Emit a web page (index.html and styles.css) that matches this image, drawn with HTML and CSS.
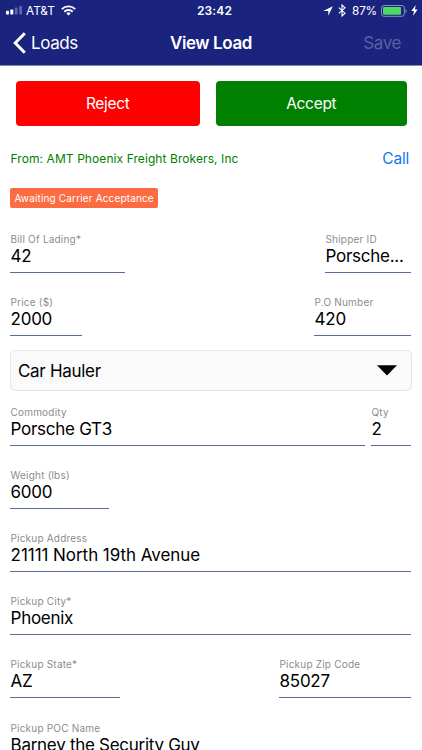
FILE: index.html
```html
<!DOCTYPE html>
<html lang="en">
<head>
    <meta charset="UTF-8">
    <meta name="viewport" content="width=device-width, initial-scale=1.0">
    <title>View Load</title>
    <link rel="stylesheet" href="styles.css">
</head>
<body>
    <header class="header">
        <div class="status-bar">
            <div class="status-left">
                <svg class="signal" width="17" height="9" viewBox="0 0 17 9">
                    <rect x="0" y="4.8" width="3" height="3.6" rx="0.6" fill="#fff"/>
                    <rect x="4.3" y="3.4" width="3" height="5" rx="0.6" fill="#fff"/>
                    <rect x="8.8" y="1.6" width="2.8" height="6.8" rx="0.6" fill="#5f65a8"/>
                    <rect x="13.2" y="0" width="2.8" height="8.4" rx="0.6" fill="#5f65a8"/>
                </svg>
                <span class="carrier">AT&amp;T</span>
                <svg class="wifi" width="15" height="11" viewBox="0 0 15 11" fill="none" stroke="#fff" stroke-width="1.9">
                    <path d="M0.8 4.1a9.6 9.6 0 0 1 13.4 0"/>
                    <path d="M3.3 6.7a6 6 0 0 1 8.4 0"/>
                    <path d="M7.5 10.6L5.3 8.4a3.1 3.1 0 0 1 4.4 0z" fill="#fff" stroke="none"/>
                </svg>
            </div>
            <span class="time">23:42</span>
            <div class="status-right">
                <svg class="location" width="10" height="10" viewBox="0 0 10 10">
                    <path d="M9.8 0.2L5.3 9.8V4.9H0.3z" fill="#fff"/>
                </svg>
                <svg class="bluetooth" width="8" height="13" viewBox="0 0 8 13" fill="none" stroke="#fff" stroke-width="1.1">
                    <path d="M0.8 3.6L7 9.2L4 12V1L7 3.8L0.8 9.4"/>
                </svg>
                <span class="percent">87%</span>
                <svg class="battery" width="26" height="12" viewBox="0 0 26 12">
                    <rect x="0.5" y="0.5" width="22.8" height="10.8" rx="2.4" fill="none" stroke="#8b90c4"/>
                    <rect x="2" y="2" width="18" height="7.8" rx="0.8" fill="#4cd964"/>
                    <path d="M24.5 4v4q1.2-0.5 1.2-2t-1.2-2z" fill="#8b90c4"/>
                </svg>
                <svg class="bolt" width="7" height="11" viewBox="0 0 7 11">
                    <path d="M4.8 0L0.3 6.1H3L2.1 10.8L6.7 4.4H3.9z" fill="#fff"/>
                </svg>
            </div>
        </div>
        <nav class="nav-bar">
            <a class="back">
                <svg width="13" height="22" viewBox="0 0 13 22" fill="none" stroke="#fff" stroke-width="3">
                    <path d="M11.8 1.2L2.2 11L11.8 20.8"/>
                </svg>
                <span>Loads</span>
            </a>
            <h1 class="title">View Load</h1>
            <span class="save">Save</span>
        </nav>
    </header>

    <main class="content">
        <div class="actions">
            <button class="btn btn-reject">Reject</button>
            <button class="btn btn-accept">Accept</button>
        </div>

        <div class="from-row">
            <span class="from">From: AMT Phoenix Freight Brokers, Inc</span>
            <a class="call">Call</a>
        </div>

        <div class="status-row">
            <span class="badge">Awaiting Carrier Acceptance</span>
        </div>

        <div class="row">
            <div class="field bill">
                <label>Bill Of Lading*</label>
                <div class="value">42</div>
            </div>
            <div class="field shipper">
                <label>Shipper ID</label>
                <div class="value">Porsche...</div>
            </div>
        </div>
        <div class="row">
            <div class="field price">
                <label>Price ($)</label>
                <div class="value">2000</div>
            </div>
            <div class="field po">
                <label>P.O Number</label>
                <div class="value">420</div>
            </div>
        </div>

        <div class="select">
            <span>Car Hauler</span>
            <svg width="20" height="11" viewBox="0 0 20 11"><path d="M0 0.3h20L10 10.6z"/></svg>
        </div>

        <div class="row">
            <div class="field commodity">
                <label>Commodity</label>
                <div class="value">Porsche GT3</div>
            </div>
            <div class="field qty">
                <label>Qty</label>
                <div class="value">2</div>
            </div>
        </div>
        <div class="row">
            <div class="field weight">
                <label>Weight (lbs)</label>
                <div class="value">6000</div>
            </div>
        </div>
        <div class="row">
            <div class="field full address">
                <label>Pickup Address</label>
                <div class="value">21111 North 19th Avenue</div>
            </div>
        </div>
        <div class="row">
            <div class="field full">
                <label>Pickup City*</label>
                <div class="value">Phoenix</div>
            </div>
        </div>
        <div class="row">
            <div class="field state">
                <label>Pickup State*</label>
                <div class="value">AZ</div>
            </div>
            <div class="field zip">
                <label>Pickup Zip Code</label>
                <div class="value">85027</div>
            </div>
        </div>
        <div class="row">
            <div class="field full">
                <label>Pickup POC Name</label>
                <div class="value">Barney the Security Guy</div>
            </div>
        </div>
    </main>
</body>
</html>
```

FILE: styles.css
```css
* {
    box-sizing: border-box;
}
body {
    margin: 0;
    height: 750px;
    overflow: hidden;
    background-color: #fff;
    font-family: Inter, "Liberation Sans", sans-serif;
    color: #000;
}
svg {
    display: block;
    flex: none;
}
.header {
    height: 66px;
    background-color: #1a237e;
    border-bottom: 1px solid #8388b8;
    color: #fff;
}
.status-bar {
    display: grid;
    grid-template-columns: 1fr auto 1fr;
    align-items: center;
    height: 21px;
    padding: 0 4px 0 6px;
    font-size: 11.8px;
}
.status-left, .status-right {
    display: flex;
    align-items: center;
}
.status-right {
    justify-content: flex-end;
}
.carrier {
    margin: 0 6px 0 3px;
}
.time {
    margin-left: 5px;
    font-weight: 600;
    font-size: 12px;
    letter-spacing: 0.1px;
}
.bluetooth {
    margin: 0 6px 0 5px;
}
.percent {
    letter-spacing: -0.2px;
}
.battery {
    margin: 0 4px 0 4px;
}
.nav-bar {
    display: grid;
    grid-template-columns: 1fr auto 1fr;
    align-items: center;
    height: 43px;
    padding: 0 21px 0 13px;
    font-size: 17px;
    letter-spacing: -0.4px;
}
.back {
    display: flex;
    align-items: center;
    gap: 5px;
}
.title {
    margin: 0 0 0 8px;
    font-size: 17px;
    font-weight: 600;
}
.save {
    justify-self: end;
    color: #5a60a3;
}
.content {
    padding: 15px 11px 0 10px;
}
.actions {
    display: flex;
    gap: 16px;
    padding: 0 4.5px 0 5.5px;
}
.btn {
    height: 45px;
    padding: 0;
    border: none;
    border-radius: 4px;
    color: #fff;
    font-family: inherit;
    font-size: 15.5px;
    letter-spacing: -0.3px;
}
.btn-reject {
    width: 184.5px;
    background-color: #ff0000;
}
.btn-accept {
    flex: 1;
    background-color: #008000;
}
.from-row {
    display: flex;
    justify-content: space-between;
    align-items: center;
    height: 65px;
    padding: 0 2px 0 0.5px;
}
.from {
    color: #008000;
    font-size: 12px;
    letter-spacing: 0.08px;
}
.call {
    color: #1279f0;
    font-size: 15.5px;
    letter-spacing: -0.2px;
}
.status-row {
    display: flex;
    align-items: center;
    height: 14px;
    margin-bottom: 5px;
}
.badge {
    height: 20px;
    padding: 0 4px 0 4.5px;
    border-radius: 2px;
    background-color: #fc6c42;
    color: #fff;
    font-size: 10px;
    line-height: 20px;
    letter-spacing: 0.15px;
}
.row {
    display: flex;
    justify-content: space-between;
}
.field {
    display: flex;
    flex-direction: column;
    justify-content: flex-end;
    height: 63.15px;
    padding-bottom: 5px;
    border-bottom: 1px solid #5a6c9c;
}
.field label {
    padding-left: 0.5px;
    color: #8c8c8c;
    font-size: 10px;
    line-height: 12px;
    letter-spacing: 0.2px;
    white-space: nowrap;
}
.value {
    padding-left: 0.6px;
    font-size: 17px;
    line-height: 22px;
    letter-spacing: -0.28px;
    white-space: nowrap;
}
.address .value {
    letter-spacing: -0.05px;
}
.bill {
    width: 115px;
}
.shipper {
    width: 86px;
}
.price {
    width: 72px;
}
.po {
    width: 97px;
}
.commodity {
    width: 355px;
}
.qty {
    width: 40px;
}
.weight {
    width: 99px;
}
.full {
    width: 100%;
}
.state {
    width: 110px;
}
.zip {
    width: 132px;
}
.select {
    display: flex;
    justify-content: space-between;
    align-items: center;
    height: 41px;
    margin: 14px -1px -8.5px 0;
    padding: 0 14px 0 7px;
    border: 1px solid #e6e6e6;
    border-radius: 5px;
    background-color: #fafafa;
    font-size: 17px;
    letter-spacing: -0.3px;
}
```
